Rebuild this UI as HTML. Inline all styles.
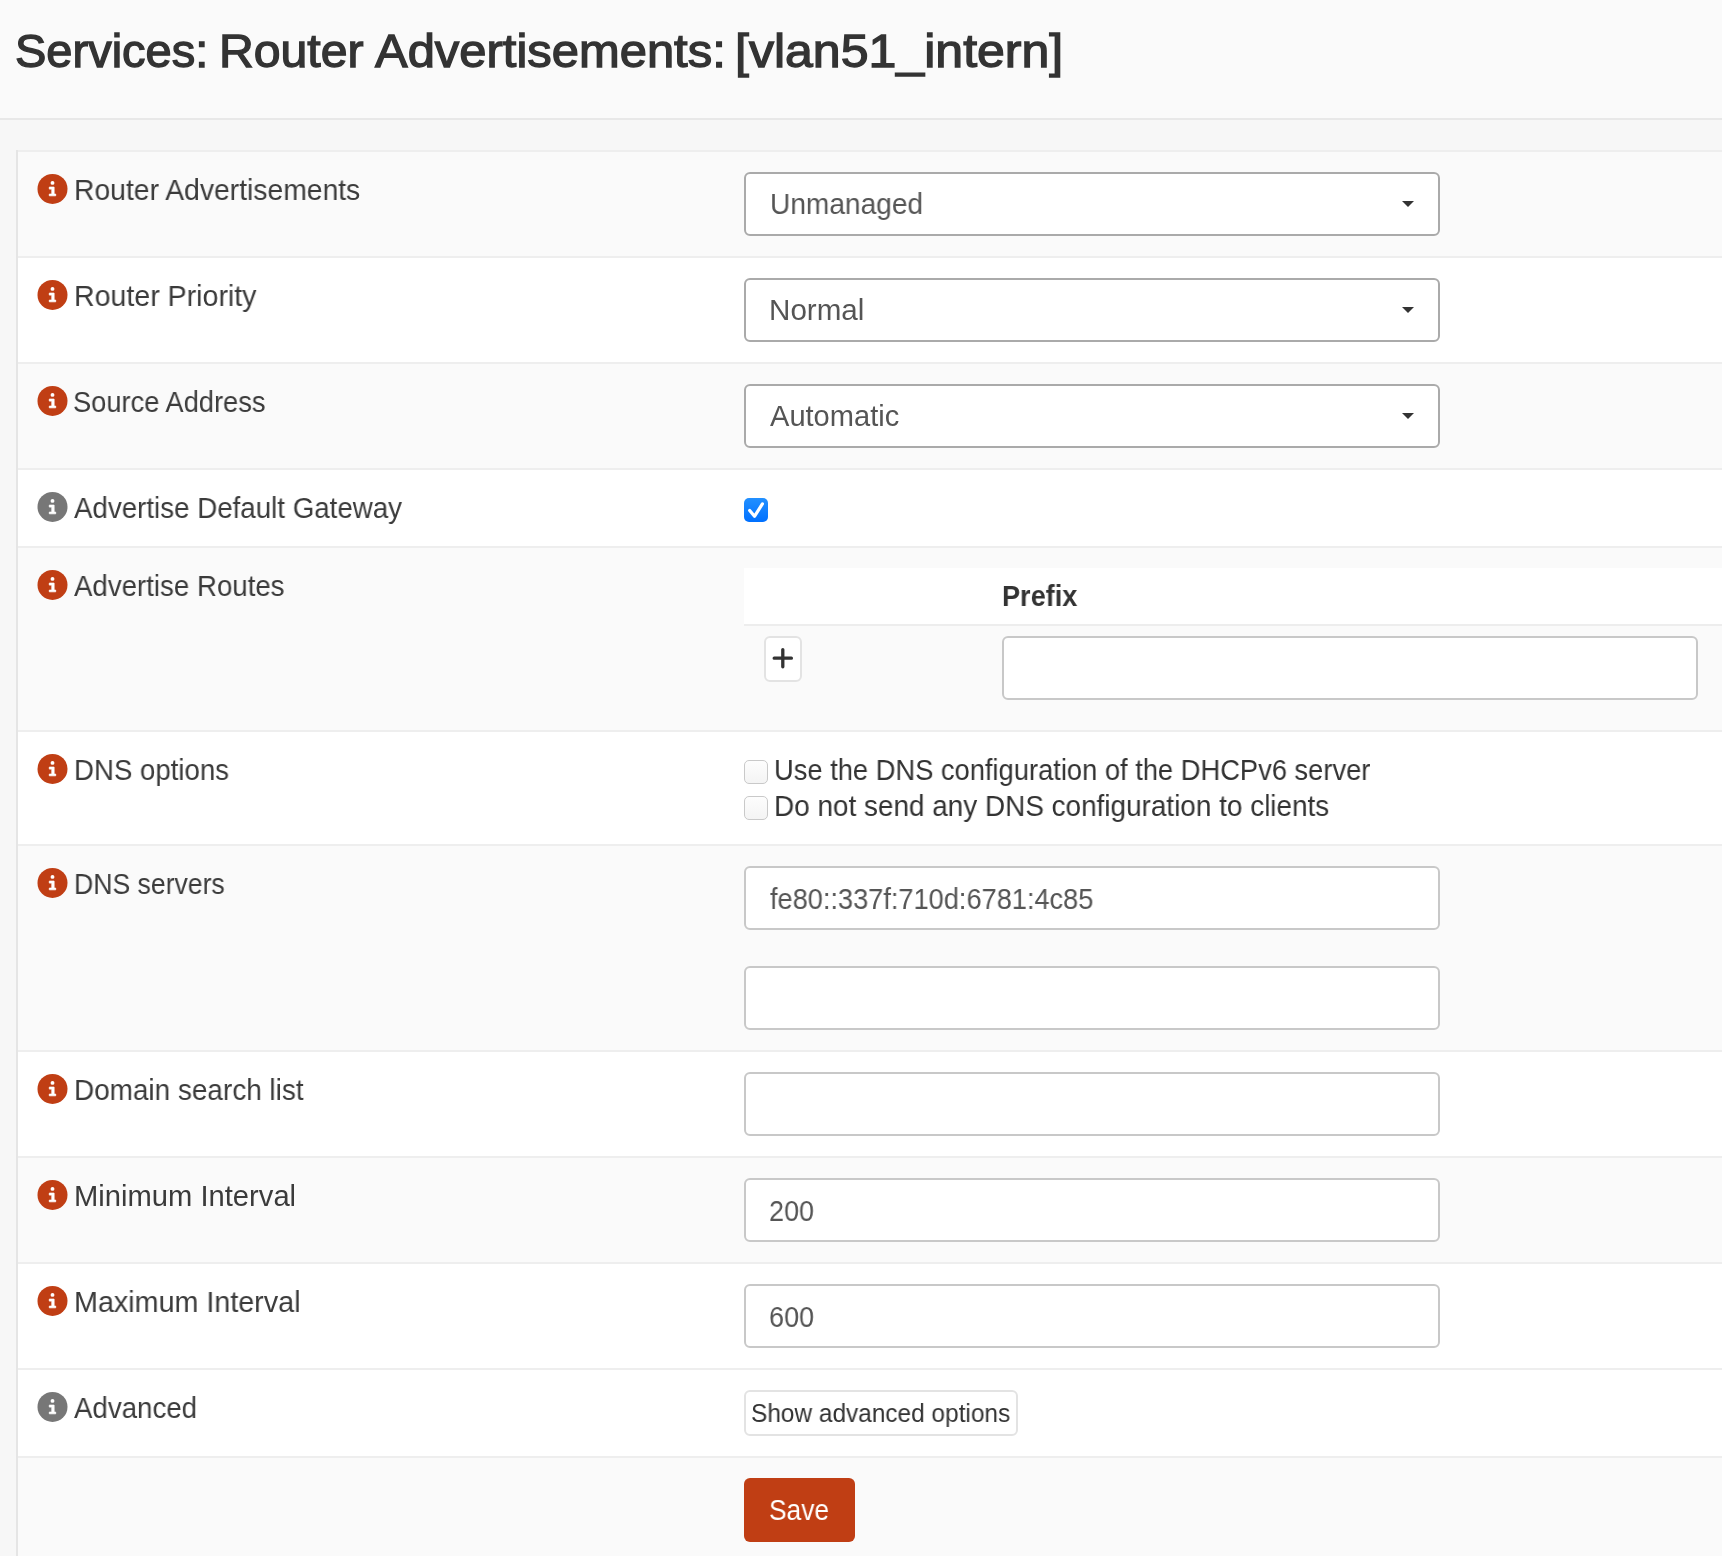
<!DOCTYPE html>
<html><head><meta charset="utf-8"><style>
html,body{margin:0;padding:0}
body{width:1722px;height:1556px;overflow:hidden;background:#f7f7f7;position:relative;font-family:"Liberation Sans",sans-serif;color:#333}
.abs{position:absolute}
.t{white-space:nowrap;will-change:transform}
#head{left:0;top:0;width:1722px;height:118px;background:#fafafa;border-bottom:2px solid #e8e8e8}
#panel{left:16px;top:150px;width:1720px;height:1420px;border-left:2px solid #e5e5e5;background:#fff}
.row{left:18px;width:1704px;border-top:2px solid #eeeeee}
.g{background:#fafafa}.w{background:#fff}
.sel,.inp{left:744px;width:692px;height:60px;border:2px solid #aaa;border-radius:6px;background:#fff}
.inp{border-color:#c8c8c8}
.caret{left:1402px;width:0;height:0;border-left:6px solid transparent;border-right:6px solid transparent;border-top:6px solid #333}
.plus{width:34px;height:42px;border:2px solid #e3e3e3;border-radius:6px;background:#fff}
.cb{width:22px;height:22px;border:1px solid #c9c9c9;border-radius:5px;background:linear-gradient(#fdfdfd,#f4f4f4)}
.btn{border:2px solid #e3e3e3;border-radius:6px;background:#fff}
.save{background:#c03e14;border-radius:6px}
</style></head><body>
<div class="abs" id="head"></div>
<div class="abs t" style="left:15.32px;top:25.181818181818187px;font-size:46px;line-height:53px;color:#333;font-weight:normal;transform-origin:0 0;transform:scaleX(1.0219);-webkit-text-stroke:1.3px #333;">Services:</div>
<div class="abs t" style="left:218.79px;top:25.181818181818187px;font-size:46px;line-height:53px;color:#333;font-weight:normal;transform-origin:0 0;transform:scaleX(1.0466);-webkit-text-stroke:1.3px #333;">Router</div>
<div class="abs t" style="left:374.60px;top:25.181818181818187px;font-size:46px;line-height:53px;color:#333;font-weight:normal;transform-origin:0 0;transform:scaleX(1.0636);-webkit-text-stroke:1.3px #333;">Advertisements:</div>
<div class="abs t" style="left:735.45px;top:25.181818181818187px;font-size:46px;line-height:53px;color:#333;font-weight:normal;transform-origin:0 0;transform:scaleX(1.0878);-webkit-text-stroke:1.3px #333;">[vlan51_intern]</div>
<div class="abs" id="panel"></div>
<div class="abs row g" style="top:150px;height:104px"></div>
<svg class="abs" style="left:37.00px;top:173.10px" width="31" height="31" viewBox="-15.5 -15.5 31 31"><circle cx="0" cy="0.45" r="15" fill="#c03e14"/><circle cx="0" cy="-5.6" r="1.95" fill="#fff"/><path d="M-3.2 -1.4 H1.6 V5.6 H3.2 V7.3 H-3.2 V5.6 H-0.7 V0.6 H-3.2 Z" fill="#fff" stroke="#fff" stroke-width="0.8" stroke-linejoin="round"/></svg>
<div class="abs t" style="left:73.64px;top:174.0px;font-size:29px;line-height:33px;color:#3b3b3b;font-weight:normal;transform-origin:0 0;transform:scaleX(0.9759);">Router Advertisements</div>
<div class="abs row w" style="top:256px;height:104px"></div>
<svg class="abs" style="left:37.00px;top:279.10px" width="31" height="31" viewBox="-15.5 -15.5 31 31"><circle cx="0" cy="0.45" r="15" fill="#c03e14"/><circle cx="0" cy="-5.6" r="1.95" fill="#fff"/><path d="M-3.2 -1.4 H1.6 V5.6 H3.2 V7.3 H-3.2 V5.6 H-0.7 V0.6 H-3.2 Z" fill="#fff" stroke="#fff" stroke-width="0.8" stroke-linejoin="round"/></svg>
<div class="abs t" style="left:73.62px;top:280.0px;font-size:29px;line-height:33px;color:#3b3b3b;font-weight:normal;transform-origin:0 0;transform:scaleX(0.9848);">Router Priority</div>
<div class="abs row g" style="top:362px;height:104px"></div>
<svg class="abs" style="left:37.00px;top:385.10px" width="31" height="31" viewBox="-15.5 -15.5 31 31"><circle cx="0" cy="0.45" r="15" fill="#c03e14"/><circle cx="0" cy="-5.6" r="1.95" fill="#fff"/><path d="M-3.2 -1.4 H1.6 V5.6 H3.2 V7.3 H-3.2 V5.6 H-0.7 V0.6 H-3.2 Z" fill="#fff" stroke="#fff" stroke-width="0.8" stroke-linejoin="round"/></svg>
<div class="abs t" style="left:73.42px;top:386.0px;font-size:29px;line-height:33px;color:#3b3b3b;font-weight:normal;transform-origin:0 0;transform:scaleX(0.9404);">Source Address</div>
<div class="abs row w" style="top:468px;height:76px"></div>
<svg class="abs" style="left:37.00px;top:491.10px" width="31" height="31" viewBox="-15.5 -15.5 31 31"><circle cx="0" cy="0.45" r="15" fill="#777777"/><circle cx="0" cy="-5.6" r="1.95" fill="#fff"/><path d="M-3.2 -1.4 H1.6 V5.6 H3.2 V7.3 H-3.2 V5.6 H-0.7 V0.6 H-3.2 Z" fill="#fff" stroke="#fff" stroke-width="0.8" stroke-linejoin="round"/></svg>
<div class="abs t" style="left:73.51px;top:492.0px;font-size:29px;line-height:33px;color:#3b3b3b;font-weight:normal;transform-origin:0 0;transform:scaleX(0.9554);">Advertise Default Gateway</div>
<div class="abs row g" style="top:546px;height:182px"></div>
<svg class="abs" style="left:37.00px;top:569.10px" width="31" height="31" viewBox="-15.5 -15.5 31 31"><circle cx="0" cy="0.45" r="15" fill="#c03e14"/><circle cx="0" cy="-5.6" r="1.95" fill="#fff"/><path d="M-3.2 -1.4 H1.6 V5.6 H3.2 V7.3 H-3.2 V5.6 H-0.7 V0.6 H-3.2 Z" fill="#fff" stroke="#fff" stroke-width="0.8" stroke-linejoin="round"/></svg>
<div class="abs t" style="left:73.51px;top:570.0px;font-size:29px;line-height:33px;color:#3b3b3b;font-weight:normal;transform-origin:0 0;transform:scaleX(0.9534);">Advertise Routes</div>
<div class="abs row w" style="top:730px;height:112px"></div>
<svg class="abs" style="left:37.00px;top:753.10px" width="31" height="31" viewBox="-15.5 -15.5 31 31"><circle cx="0" cy="0.45" r="15" fill="#c03e14"/><circle cx="0" cy="-5.6" r="1.95" fill="#fff"/><path d="M-3.2 -1.4 H1.6 V5.6 H3.2 V7.3 H-3.2 V5.6 H-0.7 V0.6 H-3.2 Z" fill="#fff" stroke="#fff" stroke-width="0.8" stroke-linejoin="round"/></svg>
<div class="abs t" style="left:73.69px;top:754.0px;font-size:29px;line-height:33px;color:#3b3b3b;font-weight:normal;transform-origin:0 0;transform:scaleX(0.9523);">DNS options</div>
<div class="abs row g" style="top:844px;height:204px"></div>
<svg class="abs" style="left:37.00px;top:867.10px" width="31" height="31" viewBox="-15.5 -15.5 31 31"><circle cx="0" cy="0.45" r="15" fill="#c03e14"/><circle cx="0" cy="-5.6" r="1.95" fill="#fff"/><path d="M-3.2 -1.4 H1.6 V5.6 H3.2 V7.3 H-3.2 V5.6 H-0.7 V0.6 H-3.2 Z" fill="#fff" stroke="#fff" stroke-width="0.8" stroke-linejoin="round"/></svg>
<div class="abs t" style="left:73.77px;top:868.0px;font-size:29px;line-height:33px;color:#3b3b3b;font-weight:normal;transform-origin:0 0;transform:scaleX(0.9174);">DNS servers</div>
<div class="abs row w" style="top:1050px;height:104px"></div>
<svg class="abs" style="left:37.00px;top:1073.10px" width="31" height="31" viewBox="-15.5 -15.5 31 31"><circle cx="0" cy="0.45" r="15" fill="#c03e14"/><circle cx="0" cy="-5.6" r="1.95" fill="#fff"/><path d="M-3.2 -1.4 H1.6 V5.6 H3.2 V7.3 H-3.2 V5.6 H-0.7 V0.6 H-3.2 Z" fill="#fff" stroke="#fff" stroke-width="0.8" stroke-linejoin="round"/></svg>
<div class="abs t" style="left:73.67px;top:1074.0px;font-size:29px;line-height:33px;color:#3b3b3b;font-weight:normal;transform-origin:0 0;transform:scaleX(0.9625);">Domain search list</div>
<div class="abs row g" style="top:1156px;height:104px"></div>
<svg class="abs" style="left:37.00px;top:1179.10px" width="31" height="31" viewBox="-15.5 -15.5 31 31"><circle cx="0" cy="0.45" r="15" fill="#c03e14"/><circle cx="0" cy="-5.6" r="1.95" fill="#fff"/><path d="M-3.2 -1.4 H1.6 V5.6 H3.2 V7.3 H-3.2 V5.6 H-0.7 V0.6 H-3.2 Z" fill="#fff" stroke="#fff" stroke-width="0.8" stroke-linejoin="round"/></svg>
<div class="abs t" style="left:73.57px;top:1180.0px;font-size:29px;line-height:33px;color:#3b3b3b;font-weight:normal;transform-origin:0 0;transform:scaleX(1.0060);">Minimum Interval</div>
<div class="abs row w" style="top:1262px;height:104px"></div>
<svg class="abs" style="left:37.00px;top:1285.10px" width="31" height="31" viewBox="-15.5 -15.5 31 31"><circle cx="0" cy="0.45" r="15" fill="#c03e14"/><circle cx="0" cy="-5.6" r="1.95" fill="#fff"/><path d="M-3.2 -1.4 H1.6 V5.6 H3.2 V7.3 H-3.2 V5.6 H-0.7 V0.6 H-3.2 Z" fill="#fff" stroke="#fff" stroke-width="0.8" stroke-linejoin="round"/></svg>
<div class="abs t" style="left:73.61px;top:1286.0px;font-size:29px;line-height:33px;color:#3b3b3b;font-weight:normal;transform-origin:0 0;transform:scaleX(0.9898);">Maximum Interval</div>
<div class="abs row w" style="top:1368px;height:86px"></div>
<svg class="abs" style="left:37.00px;top:1391.10px" width="31" height="31" viewBox="-15.5 -15.5 31 31"><circle cx="0" cy="0.45" r="15" fill="#777777"/><circle cx="0" cy="-5.6" r="1.95" fill="#fff"/><path d="M-3.2 -1.4 H1.6 V5.6 H3.2 V7.3 H-3.2 V5.6 H-0.7 V0.6 H-3.2 Z" fill="#fff" stroke="#fff" stroke-width="0.8" stroke-linejoin="round"/></svg>
<div class="abs t" style="left:73.51px;top:1392.0px;font-size:29px;line-height:33px;color:#3b3b3b;font-weight:normal;transform-origin:0 0;transform:scaleX(0.9544);">Advanced</div>
<div class="abs row g" style="top:1456px;height:200px"></div>
<div class="abs sel" style="top:172px"></div><div class="abs t" style="left:769.80px;top:188.0px;font-size:29px;line-height:33px;color:#555;font-weight:normal;transform-origin:0 0;transform:scaleX(0.9694);">Unmanaged</div><div class="abs caret" style="top:201px"></div>
<div class="abs sel" style="top:278px"></div><div class="abs t" style="left:768.73px;top:294.0px;font-size:29px;line-height:33px;color:#555;font-weight:normal;transform-origin:0 0;transform:scaleX(1.0207);">Normal</div><div class="abs caret" style="top:307px"></div>
<div class="abs sel" style="top:384px"></div><div class="abs t" style="left:769.80px;top:400.0px;font-size:29px;line-height:33px;color:#555;font-weight:normal;transform-origin:0 0;transform:scaleX(1.0021);">Automatic</div><div class="abs caret" style="top:413px"></div>
<svg class="abs" style="left:744px;top:498px" width="24" height="24" viewBox="0 0 24 24"><defs><linearGradient id="cg" x1="0" y1="0" x2="0" y2="1"><stop offset="0" stop-color="#2290ff"/><stop offset="1" stop-color="#0070ff"/></linearGradient></defs><rect x="0" y="0" width="24" height="24" rx="5" fill="url(#cg)"/><path d="M5.7 12.5 L10.5 18.3 L18.4 5.9" stroke="#fff" stroke-width="3.2" fill="none" stroke-linecap="round" stroke-linejoin="round"/></svg>
<div class="abs" style="left:744px;top:568px;width:978px;height:56px;background:#fff;border-bottom:2px solid #ededed"></div>
<div class="abs t" style="left:1002.06px;top:580.0px;font-size:29px;line-height:33px;color:#333;font-weight:bold;transform-origin:0 0;transform:scaleX(0.9338);">Prefix</div>
<div class="abs plus" style="left:764px;top:636px"></div>
<svg class="abs" style="left:764px;top:636px" width="38" height="46" viewBox="0 0 38 46"><path d="M18.8 13.6 V30.8 M10.2 22.2 H27.4" stroke="#333" stroke-width="3.3" stroke-linecap="round"/></svg>
<div class="abs inp" style="top:636px;left:1002px;width:692px"></div>
<div class="abs cb" style="left:744px;top:760px"></div>
<div class="abs t" style="left:773.86px;top:754.0px;font-size:29px;line-height:33px;color:#333;font-weight:normal;transform-origin:0 0;transform:scaleX(0.9415);">Use the DNS configuration of the DHCPv6 server</div>
<div class="abs cb" style="left:744px;top:796px"></div>
<div class="abs t" style="left:773.67px;top:790.0px;font-size:29px;line-height:33px;color:#333;font-weight:normal;transform-origin:0 0;transform:scaleX(0.9621);">Do not send any DNS configuration to clients</div>
<div class="abs inp" style="top:866px;left:744px;width:692px"></div><div class="abs t" style="left:769.66px;top:883.0px;font-size:29px;line-height:33px;color:#555;font-weight:normal;transform-origin:0 0;transform:scaleX(0.9370);">fe80::337f:710d:6781:4c85</div>
<div class="abs inp" style="top:966px;left:744px;width:692px"></div>
<div class="abs inp" style="top:1072px;left:744px;width:692px"></div>
<div class="abs inp" style="top:1178px;left:744px;width:692px"></div><div class="abs t" style="left:769.07px;top:1195.0px;font-size:29px;line-height:33px;color:#555;font-weight:normal;transform-origin:0 0;transform:scaleX(0.9299);">200</div>
<div class="abs inp" style="top:1284px;left:744px;width:692px"></div><div class="abs t" style="left:768.98px;top:1301.0px;font-size:29px;line-height:33px;color:#555;font-weight:normal;transform-origin:0 0;transform:scaleX(0.9317);">600</div>
<div class="abs btn" style="left:744px;top:1390px;width:270px;height:42px"></div>
<div class="abs t" style="left:751.04px;top:1399.0px;font-size:25px;line-height:29px;color:#333;font-weight:normal;transform-origin:0 0;transform:scaleX(0.9765);">Show advanced options</div>
<div class="abs save" style="left:744px;top:1478px;width:111px;height:64px"></div>
<div class="abs t" style="left:769.47px;top:1494.0px;font-size:29px;line-height:33px;color:#fff;font-weight:normal;transform-origin:0 0;transform:scaleX(0.9087);">Save</div>
</body></html>
